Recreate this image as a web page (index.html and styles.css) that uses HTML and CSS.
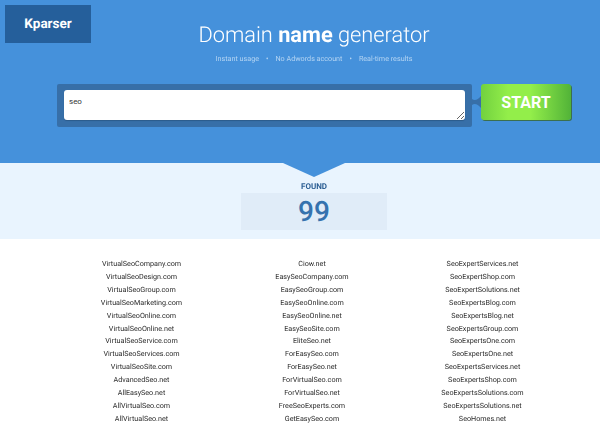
FILE: index.html
```html
<!DOCTYPE html>
<html lang="en">
<head>
    <meta charset="UTF-8">
    <title>Domain name generator</title>
    <link rel="stylesheet" href="styles.css">
</head>
<body>
    <header class="hero">
        <a class="logo soft">Kparser</a>
        <h1 class="title soft">Domain <b>name</b> generator</h1>
        <ul class="perks soft">
            <li>Instant usage</li>
            <li class="dot">•</li>
            <li>No Adwords account</li>
            <li class="dot">•</li>
            <li>Real-time results</li>
        </ul>
        <div class="search">
            <div class="search-box">
                <textarea class="search-input">seo</textarea>
            </div>
            <svg class="search-link" width="9" height="12" viewBox="0 0 9 12">
                <path d="M0 3 Q4 6 9 0 V12 Q4 6 0 9 Z" fill="#376fa8"/>
            </svg>
            <button class="start">START</button>
        </div>
    </header>
    <section class="found">
        <div class="arrow"></div>
        <div class="found-label soft">FOUND</div>
        <div class="found-count">99</div>
    </section>
    <section class="results">
        <ul class="col soft">
            <li>VirtualSeoCompany.com</li>
            <li>VirtualSeoDesign.com</li>
            <li>VirtualSeoGroup.com</li>
            <li>VirtualSeoMarketing.com</li>
            <li>VirtualSeoOnline.com</li>
            <li>VirtualSeoOnline.net</li>
            <li>VirtualSeoService.com</li>
            <li>VirtualSeoServices.com</li>
            <li>VirtualSeoSite.com</li>
            <li>AdvancedSeo.net</li>
            <li>AllEasySeo.net</li>
            <li>AllVirtualSeo.com</li>
            <li>AllVirtualSeo.net</li>
        </ul>
        <ul class="col soft">
            <li>Ciow.net</li>
            <li>EasySeoCompany.com</li>
            <li>EasySeoGroup.com</li>
            <li>EasySeoOnline.com</li>
            <li>EasySeoOnline.net</li>
            <li>EasySeoSite.com</li>
            <li>EliteSeo.net</li>
            <li>ForEasySeo.com</li>
            <li>ForEasySeo.net</li>
            <li>ForVirtualSeo.com</li>
            <li>ForVirtualSeo.net</li>
            <li>FreeSeoExperts.com</li>
            <li>GetEasySeo.com</li>
        </ul>
        <ul class="col soft">
            <li>SeoExpertServices.net</li>
            <li>SeoExpertShop.com</li>
            <li>SeoExpertSolutions.net</li>
            <li>SeoExpertsBlog.com</li>
            <li>SeoExpertsBlog.net</li>
            <li>SeoExpertsGroup.com</li>
            <li>SeoExpertsOne.com</li>
            <li>SeoExpertsOne.net</li>
            <li>SeoExpertsServices.net</li>
            <li>SeoExpertsShop.com</li>
            <li>SeoExpertsSolutions.com</li>
            <li>SeoExpertsSolutions.net</li>
            <li>SeoHomes.net</li>
        </ul>
    </section>
</body>
</html>
```

FILE: styles.css
```css
html, body {
    margin: 0;
    height: 426px;
    overflow: hidden;
    background-color: #fff;
    font-family: Roboto, "Liberation Sans", sans-serif;
    text-rendering: geometricPrecision;
}

ul {
    list-style: none;
    margin: 0;
    padding: 0;
}

/* grey antialiasing for small text */
.soft {
    will-change: opacity;
}

/* Blue top part */
.hero {
    position: relative;
    height: 163px;
    box-sizing: border-box;
    padding: 21px 0 0 28px;
    background-color: #4591db;
    color: #fff;
    text-align: center;
}

.logo {
    position: absolute;
    left: 5px;
    top: 5px;
    width: 86px;
    height: 38px;
    background-color: #255f9b;
    font-size: 13.5px;
    font-weight: 700;
    line-height: 38px;
}

.title {
    margin: 0;
    font-size: 21.8px;
    font-weight: 300;
    line-height: 30px;
}

.title b {
    font-weight: 700;
}

.perks {
    display: flex;
    justify-content: center;
    gap: 7px;
    margin-top: 1px;
    color: #b5d5f3;
    font-size: 7.2px;
    line-height: 14px;
}

.search {
    display: flex;
    align-items: flex-start;
    margin: 18px 29px 0;
}

.search-box {
    display: flex;
    box-sizing: border-box;
    width: 415px;
    height: 43px;
    padding: 6px 7px 7px;
    border-radius: 2px;
    background-color: #376fa8;
}

.search-input {
    flex: 1;
    box-sizing: border-box;
    padding: 6px 5px;
    border: 0;
    border-radius: 3px;
    outline: 0;
    background-color: #fff;
    box-shadow: 0 1px 1px #2c5b8b;
    color: #333;
    font-family: Roboto, "Liberation Sans", sans-serif;
    font-size: 8px;
    line-height: 11px;
}

.search-link {
    flex: none;
    margin-top: 12px;
}

.start {
    width: 90px;
    height: 36px;
    padding: 0;
    border: 0;
    border-radius: 3px;
    background: linear-gradient(to right, #72d13f, #93ee4a 30%, #93ee4a 55%, #52b338);
    box-shadow: 1px 1px 0 #3b6f4f;
    color: #fff;
    font-family: Roboto, "Liberation Sans", sans-serif;
    font-size: 16px;
    font-weight: 700;
}

/* Found counter */
.found {
    position: relative;
    display: flex;
    flex-direction: column;
    align-items: center;
    height: 76px;
    box-sizing: border-box;
    padding: 18px 0 0 28px;
    background-color: #e9f4fe;
}

.arrow {
    position: absolute;
    left: 283px;
    top: 0;
    border-top: 14px solid #4591db;
    border-left: 31px solid transparent;
    border-right: 31px solid transparent;
}

.found-label {
    color: #2d5f94;
    font-size: 8px;
    font-weight: 700;
    line-height: 12px;
}

.found-count {
    width: 146px;
    height: 37px;
    background-color: #e0ecf8;
    color: #3572ae;
    font-size: 28px;
    font-weight: 500;
    line-height: 37px;
    text-align: center;
}

/* Result lists */
.results {
    display: grid;
    grid-template-columns: repeat(3, 170.5px);
    justify-content: center;
    padding: 19px 0 0 24px;
}

.col {
    color: #2a2a2a;
    font-size: 7.2px;
    line-height: 12.9px;
    text-align: center;
}
```
